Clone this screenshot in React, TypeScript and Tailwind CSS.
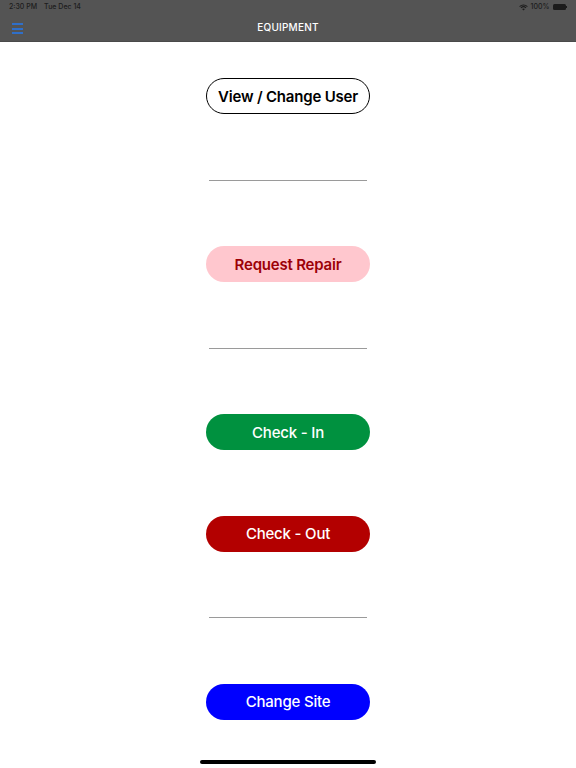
import React from "react";

function Btn({ label, cls }: { label: string; cls: string }) {
  return (
    <button
      className={
        "w-[164px] h-[36px] rounded-full flex items-center justify-center text-[15px] tracking-[-0.2px] leading-none " +
        cls
      }
      style={{ fontFamily: "Inter, 'Noto Sans', sans-serif" }}
    >
      {label}
    </button>
  );
}

function Line() {
  return <div className="w-[158px] h-px bg-[#9a9a9a]" />;
}

export default function App() {
  return (
    <div
      className="w-[576px] h-[768px] bg-white relative overflow-hidden"
      style={{ fontFamily: "Inter, 'Noto Sans', sans-serif" }}
    >
      <div className="h-[42px] bg-[#545454] border-b border-[#4a4a4a] flex flex-col">
        <div className="h-[14px] flex items-center justify-between px-[9px] text-[7px] text-[#1c1c1c] font-medium">
          <div className="flex gap-[7px]">
            <span>2:30 PM</span>
            <span>Tue Dec 14</span>
          </div>
          <div className="flex items-center gap-[3px]">
            <svg width="9" height="7" viewBox="0 0 12 9">
              <path d="M6 8.5 L4.2 6.6 A2.6 2.6 0 0 1 7.8 6.6 Z" fill="#1c1c1c" />
              <path d="M2.6 5 A4.9 4.9 0 0 1 9.4 5" stroke="#1c1c1c" strokeWidth="1.4" fill="none" />
              <path d="M0.8 3.2 A7.4 7.4 0 0 1 11.2 3.2" stroke="#1c1c1c" strokeWidth="1.4" fill="none" />
            </svg>
            <span>100%</span>
            <div className="flex items-center">
              <div className="w-[13px] h-[6px] rounded-[1.5px] bg-[#1c1c1c]" />
              <div className="w-[1px] h-[2px] bg-[#1c1c1c] ml-[0.5px]" />
            </div>
          </div>
        </div>
        <div className="flex-1 flex items-center relative">
          <div className="absolute left-[12px] top-[9px] flex flex-col gap-[2.5px]">
            <div className="w-[11px] h-[2px] bg-[#2f6fc9]" />
            <div className="w-[11px] h-[2px] bg-[#2f6fc9]" />
            <div className="w-[11px] h-[2px] bg-[#2f6fc9]" />
          </div>
          <div className="flex-1 text-center text-white text-[10px] font-medium tracking-[0.2px] -mt-[1px]">
            EQUIPMENT
          </div>
        </div>
      </div>

      <div className="flex flex-col items-center pt-[36px] gap-[65.5px]">
        <Btn label="View / Change User" cls="font-semibold bg-white border-[1.5px] border-black text-black" />
        <Line />
        <Btn label="Request Repair" cls="font-semibold bg-[#ffc7ce] text-[#9c0006]" />
        <Line />
        <Btn label="Check - In" cls="font-medium bg-[#00913f] text-white" />
        <Btn label="Check - Out" cls="font-medium bg-[#b30000] text-white" />
        <Line />
        <Btn label="Change Site" cls="font-medium bg-[#0000ff] text-white" />
      </div>

      <div className="absolute left-[200px] top-[760px] w-[176px] h-[4px] rounded-full bg-black" />
    </div>
  );
}
